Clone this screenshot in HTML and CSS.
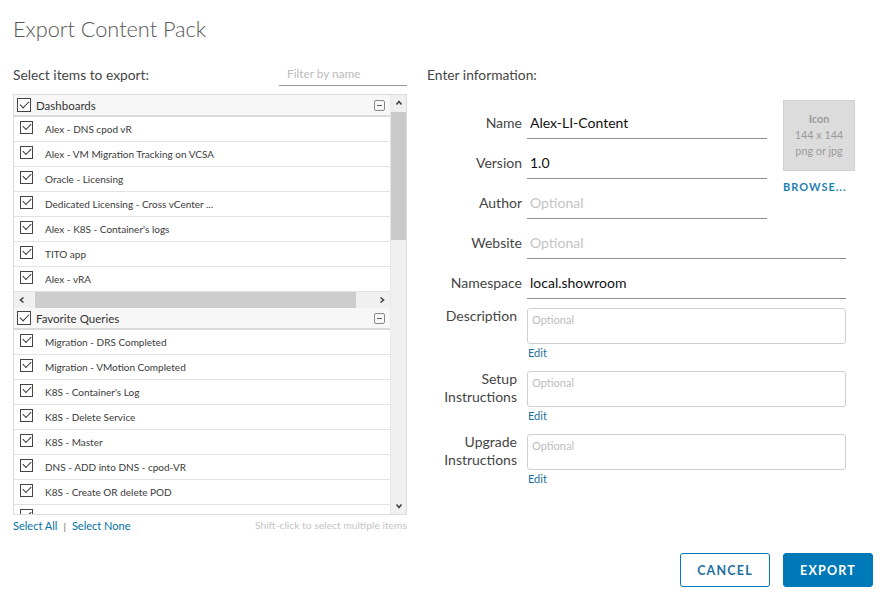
FILE: index.html
```html
<!DOCTYPE html>
<html lang="en">
<head>
<meta charset="utf-8">
<title>Export Content Pack</title>
<link rel="stylesheet" href="styles.css">
</head>
<body>
<div class="dialog">
  <h1 class="title">Export Content Pack</h1>
  <div class="columns">
    <section class="left">
      <div class="left-head">
        <span class="section-label">Select items to export:</span>
        <input class="filter" type="text" placeholder="Filter by name">
      </div>
      <div class="listbox">
        <div class="list-scroll">
          <div class="group">
            <div class="group-head"><span class="cb cb-head"></span><span class="group-name">Dashboards</span><span class="collapse"></span></div>
            <ul class="items">
              <li><span class="cb"></span>Alex - DNS cpod vR</li>
              <li><span class="cb"></span>Alex - VM Migration Tracking on VCSA</li>
              <li><span class="cb"></span>Oracle - Licensing</li>
              <li><span class="cb"></span>Dedicated Licensing - Cross vCenter ...</li>
              <li><span class="cb"></span>Alex - K8S - Container's logs</li>
              <li><span class="cb"></span>TITO app</li>
              <li><span class="cb"></span>Alex - vRA</li>
            </ul>
            <div class="hscroll">
              <svg class="arrow" viewBox="0 0 8 8"><path d="M5.5 1.5 L2.5 4 L5.5 6.5" fill="none" stroke="#444" stroke-width="1.6"/></svg>
              <span class="hthumb"></span>
              <svg class="arrow" viewBox="0 0 8 8"><path d="M2.5 1.5 L5.5 4 L2.5 6.5" fill="none" stroke="#444" stroke-width="1.6"/></svg>
            </div>
          </div>
          <div class="group">
            <div class="group-head"><span class="cb cb-head"></span><span class="group-name">Favorite Queries</span><span class="collapse"></span></div>
            <ul class="items">
              <li><span class="cb"></span>Migration - DRS Completed</li>
              <li><span class="cb"></span>Migration - VMotion Completed</li>
              <li><span class="cb"></span>K8S - Container's Log</li>
              <li><span class="cb"></span>K8S - Delete Service</li>
              <li><span class="cb"></span>K8S - Master</li>
              <li><span class="cb"></span>DNS - ADD into DNS - cpod-VR</li>
              <li><span class="cb"></span>K8S - Create OR delete POD</li>
              <li><span class="cb"></span></li>
            </ul>
          </div>
        </div>
        <div class="vscroll">
          <svg class="arrow" viewBox="0 0 8 8"><path d="M1.5 5.5 L4 2.5 L6.5 5.5" fill="none" stroke="#444" stroke-width="1.6"/></svg>
          <span class="vthumb"></span>
          <span class="vtrack"></span>
          <svg class="arrow" viewBox="0 0 8 8"><path d="M1.5 2.5 L4 5.5 L6.5 2.5" fill="none" stroke="#444" stroke-width="1.6"/></svg>
        </div>
      </div>
      <div class="left-foot">
        <span class="links"><a href="#">Select All</a><span class="sep">|</span><a href="#">Select None</a></span>
        <span class="hint">Shift-click to select multiple items</span>
      </div>
    </section>
    <section class="right">
      <div class="section-label">Enter information:</div>
      <div class="form">
        <label class="lbl">Name</label>
        <input class="field" type="text" value="Alex-LI-Content">
        <div class="icon-col">
          <div class="icon-box"><span class="icon-title">Icon</span><span>144 x 144</span><span>png or jpg</span></div>
          <a class="browse" href="#">BROWSE...</a>
        </div>
        <label class="lbl">Version</label>
        <input class="field" type="text" value="1.0">
        <label class="lbl">Author</label>
        <input class="field" type="text" placeholder="Optional">
        <label class="lbl">Website</label>
        <input class="field wide" type="text" placeholder="Optional">
        <label class="lbl">Namespace</label>
        <input class="field wide" type="text" value="local.showroom">
        <label class="lbl ta-lbl">Description</label>
        <div class="ta-block"><textarea placeholder="Optional"></textarea><a class="edit" href="#">Edit</a></div>
        <label class="lbl ta-lbl">Setup<br>Instructions</label>
        <div class="ta-block"><textarea placeholder="Optional"></textarea><a class="edit" href="#">Edit</a></div>
        <label class="lbl ta-lbl">Upgrade<br>Instructions</label>
        <div class="ta-block"><textarea placeholder="Optional"></textarea><a class="edit" href="#">Edit</a></div>
      </div>
    </section>
  </div>
  <div class="actions">
    <button class="btn btn-outline" type="button">CANCEL</button>
    <button class="btn btn-primary" type="button">EXPORT</button>
  </div>
</div>
</body>
</html>
```
FILE: styles.css
```css
* { box-sizing: border-box; }
html, body { margin: 0; padding: 0; background: #fff; }
body {
  font-family: Lato, "Open Sans", "Liberation Sans", sans-serif;
  color: #333;
}
.dialog {
  width: 891px;
  height: 595px;
  padding: 14px 18px 8px 13px;
  display: flex;
  flex-direction: column;
}
.title {
  margin: 0;
  font-size: 21.7px;
  line-height: 30px;
  font-weight: 300;
  color: #565656;
}
.columns {
  display: flex;
  margin-top: 18px;
}
.left { width: 394px; display: flex; flex-direction: column; }
.right { margin-left: 20px; flex: 1; }
.section-label {
  font-size: 13.8px;
  line-height: 26px;
  color: #454545;
}
.left-head {
  display: flex;
  justify-content: space-between;
  height: 32px;
}
.filter {
  width: 128px;
  height: 24px;
  border: 0;
  border-bottom: 1px solid #9a9a9a;
  padding: 0 8px;
  font: 11.8px Lato, "Open Sans", sans-serif;
  color: #333;
  outline: none;
}
.filter::placeholder { color: #bbb; }

.listbox {
  height: 421px;
  border: 1px solid #dcdcdc;
  display: flex;
  overflow: hidden;
}
.list-scroll { flex: 1; overflow: hidden; }
.group-head {
  display: flex;
  align-items: center;
  height: 22px;
  padding: 0 5px 0 3px;
  background: #f7f7f7;
  border-bottom: 2px solid #d9d9d9;
  font-size: 11.5px;
  color: #333;
}
.group-name { flex: 1; margin-left: 5px; }
.items { list-style: none; margin: 0; padding: 0; }
.items li {
  height: 25px;
  border-bottom: 1px solid #e2e2e2;
  display: flex;
  align-items: center;
  padding-left: 6px;
  font-size: 10px;
  color: #3a3a3a;
}
.items li .cb { margin-right: 12px; margin-top: -4px; }
.cb {
  position: relative;
  display: inline-block;
  width: 13px;
  height: 13px;
  border: 1px solid #444;
  background: #fff;
  flex: none;
}
.cb::after {
  content: "";
  position: absolute;
  left: 2px;
  top: 1px;
  width: 7px;
  height: 4px;
  border-left: 1.3px solid #333;
  border-bottom: 1.3px solid #333;
  transform: rotate(-45deg);
}
.cb-head { width: 14px; height: 14px; }
.cb-head::after { left: 2px; top: 2px; width: 8px; }
.collapse {
  position: relative;
  width: 11px;
  height: 11px;
  border: 1px solid #888;
  border-radius: 2px;
}
.collapse::after {
  content: "";
  position: absolute;
  left: 2px;
  right: 2px;
  top: 4px;
  height: 1px;
  background: #666;
}
.hscroll {
  height: 16px;
  display: flex;
  align-items: center;
  background: #f0f0f0;
  padding: 0 4px;
}
.hscroll .arrow { width: 8px; height: 8px; }
.hthumb {
  height: 16px;
  margin: 0 22px 0 9px;
  flex: 1;
  background: #cdcdcd;
}
.vscroll {
  width: 16px;
  display: flex;
  flex-direction: column;
  align-items: center;
  background: #f0f0f0;
  border-left: 1px solid #e8e8e8;
}
.vscroll .arrow { width: 8px; height: 8px; margin: 4px 0; }
.vthumb {
  width: 15px;
  height: 128px;
  background: #c9c9c9;
  margin-top: 1px;
}
.vtrack { flex: 1; }
.left-foot {
  display: flex;
  justify-content: space-between;
  line-height: 21px;
  font-size: 11px;
}
.links a { color: #0072a3; text-decoration: none; }
.sep { color: #666; margin: 0 6px; font-size: 10px; }
.hint { color: #c4c4c4; font-size: 10.3px; }

.form {
  display: grid;
  grid-template-columns: 95px 240px 83px;
  column-gap: 5px;
  margin-top: 11px;
}
.lbl {
  text-align: right;
  font-size: 14px;
  line-height: 32px;
  color: #454545;
  align-self: end;
  margin-top: 8px;
  grid-column: 1;
}
.field {
  grid-column: 2;
  height: 32px;
  margin-top: 8px;
  border: 0;
  border-bottom: 1px solid #8f8f8f;
  padding: 0 3px;
  font: 14px Lato, "Open Sans", sans-serif;
  color: #111;
  outline: none;
  width: 240px;
}
.field::placeholder { color: #c4c4c4; }
.field.wide { grid-column: 2 / 4; width: 319px; }
.icon-col {
  grid-column: 3;
  grid-row: 1 / 4;
  padding-left: 11px;
  display: flex;
  flex-direction: column;
}
.icon-box {
  width: 72px;
  height: 71px;
  margin-top: 1px;
  background: #dcdcdc;
  border: 1px solid #d0d0d0;
  display: flex;
  flex-direction: column;
  align-items: center;
  padding-top: 10px;
  font-size: 10.8px;
  line-height: 16px;
  color: #9b9b9b;
}
.icon-title { font-weight: 700; }
.browse {
  margin-top: 8px;
  font-size: 11px;
  line-height: 16px;
  font-weight: 700;
  letter-spacing: 1px;
  color: #1f7fb5;
  text-decoration: none;
  white-space: nowrap;
}
.ta-lbl {
  align-self: start;
  line-height: 18px;
  margin-top: 8px;
  padding-right: 5px;
}
.ta-block {
  grid-column: 2 / 4;
  padding-top: 9px;
  display: flex;
  flex-direction: column;
  align-items: flex-start;
}
textarea {
  width: 319px;
  height: 36px;
  border: 1px solid #cfcfcf;
  border-radius: 3px;
  resize: none;
  padding: 4px 4px;
  font: 11px Lato, "Open Sans", sans-serif;
  outline: none;
}
textarea::placeholder { color: #bdbdbd; }
.edit {
  font-size: 11px;
  line-height: 18px;
  color: #1b6f9e;
  text-decoration: none;
  margin-left: 1px;
}
.actions {
  margin-top: auto;
  display: flex;
  justify-content: flex-end;
  gap: 13px;
}
.btn {
  width: 90px;
  height: 34px;
  border-radius: 3px;
  font: 700 12.5px Lato, "Open Sans", sans-serif;
  letter-spacing: 1.2px;
  cursor: pointer;
}
.btn-outline { background: #fff; border: 1px solid #0079b8; color: #1f6f9e; }
.btn-primary { background: #0079b8; border: 1px solid #0079b8; color: #fff; }
```
